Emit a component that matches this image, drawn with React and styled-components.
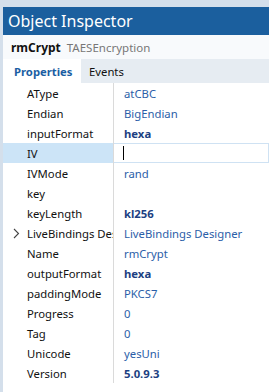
import React from 'react';
import styled, { createGlobalStyle } from 'styled-components';

const GlobalStyle = createGlobalStyle`
  html, body {
    margin: 0;
    padding: 0;
    background: #d4dfeb;
  }
  body {
    font-family: "Segoe UI", "Noto Sans", "Open Sans", sans-serif;
  }
`;

const props = [
  { name: 'AType', value: 'atCBC' },
  { name: 'Endian', value: 'BigEndian' },
  { name: 'inputFormat', value: 'hexa', bold: true },
  { name: 'IV', value: '', selected: true },
  { name: 'IVMode', value: 'rand' },
  { name: 'key', value: '' },
  { name: 'keyLength', value: 'kl256', bold: true },
  { name: 'LiveBindings Designer', value: 'LiveBindings Designer', expandable: true },
  { name: 'Name', value: 'rmCrypt' },
  { name: 'outputFormat', value: 'hexa', bold: true },
  { name: 'paddingMode', value: 'PKCS7' },
  { name: 'Progress', value: '0' },
  { name: 'Tag', value: '0' },
  { name: 'Unicode', value: 'yesUni' },
  { name: 'Version', value: '5.0.9.3', bold: true },
];

function App() {
  return (
    <>
      <GlobalStyle />
      <Window>
        <TitleBar>Object Inspector</TitleBar>
        <Panel>
          <ObjectHeader>
            <ObjName>rmCrypt</ObjName>
            <ObjType>TAESEncryption</ObjType>
          </ObjectHeader>
          <Tabs>
            <Tab active>Properties</Tab>
            <Tab>Events</Tab>
          </Tabs>
          <Grid>
            {props.map((p) => (
              <Row key={p.name}>
                <NameCell selected={p.selected}>
                  <Chevron>
                    {p.expandable && (
                      <svg width="7" height="11" viewBox="0 0 7 11">
                        <path d="M1 1 L5.5 5.5 L1 10" fill="none" stroke="#444" strokeWidth="1.1" />
                      </svg>
                    )}
                  </Chevron>
                  <NameText>{p.name}</NameText>
                </NameCell>
                <ValueCell selected={p.selected} bold={p.bold}>
                  {p.selected ? <Caret /> : p.value}
                </ValueCell>
              </Row>
            ))}
          </Grid>
        </Panel>
      </Window>
    </>
  );
}

const Window = styled.div`
  width: 269px;
  height: 392px;
  padding-top: 7px;
  box-sizing: border-box;
  display: flex;
  flex-direction: column;
  overflow: hidden;
`;

const TitleBar = styled.div`
  height: 28px;
  margin-left: 3px;
  padding-left: 5px;
  background: #1b5f9e;
  color: #ffffff;
  font-size: 16px;
  line-height: 28px;
  white-space: nowrap;
`;

const Panel = styled.div`
  flex: 1;
  margin-left: 3px;
  background: #ffffff;
  display: flex;
  flex-direction: column;
`;

const ObjectHeader = styled.div`
  height: 24px;
  background: #f8fafc;
  display: flex;
  align-items: center;
  gap: 6px;
  padding-left: 8px;
  font-size: 11.5px;
`;

const ObjName = styled.span`
  font-weight: bold;
  font-size: 12px;
  color: #111;
`;

const ObjType = styled.span`
  color: #777;
`;

const Tabs = styled.div`
  height: 24px;
  background: #e6ecf2;
  display: flex;
  align-items: stretch;
  font-size: 11.3px;
`;

const Tab = styled.div`
  display: flex;
  align-items: center;
  padding: 0 ${(p) => (p.active ? '8px' : '8px')} 0 ${(p) => (p.active ? '11px' : '8px')};
  width: ${(p) => (p.active ? '78px' : 'auto')};
  box-sizing: border-box;
  background: ${(p) => (p.active ? '#ffffff' : 'transparent')};
  color: ${(p) => (p.active ? '#1a5ea3' : '#111')};
  font-weight: ${(p) => (p.active ? 'bold' : 'normal')};
`;

const Grid = styled.div`
  display: flex;
  flex-direction: column;
`;

const Row = styled.div`
  display: grid;
  grid-template-columns: 111px 1fr;
  height: 20px;
  font-size: 11.3px;
`;

const NameCell = styled.div`
  display: flex;
  align-items: center;
  background: ${(p) => (p.selected ? '#cce4f7' : 'transparent')};
  border-right: 1px solid #dadada;
  overflow: hidden;
  white-space: nowrap;
  color: #111;
`;

const Chevron = styled.span`
  width: 24px;
  flex: none;
  display: flex;
  justify-content: center;
  padding-left: 2px;
  box-sizing: border-box;
`;

const NameText = styled.span`
  white-space: nowrap;
`;

const ValueCell = styled.div`
  display: flex;
  align-items: center;
  padding-left: ${(p) => (p.selected ? '9px' : '10px')};
  white-space: nowrap;
  color: ${(p) => (p.bold ? '#1c3f82' : '#2b5ea8')};
  font-weight: ${(p) => (p.bold ? 'bold' : 'normal')};
  border: ${(p) => (p.selected ? '1px solid #cfe2f3' : 'none')};
  border-left: none;
`;

const Caret = styled.span`
  display: block;
  width: 1px;
  height: 14px;
  background: #000;
`;

export default App;
